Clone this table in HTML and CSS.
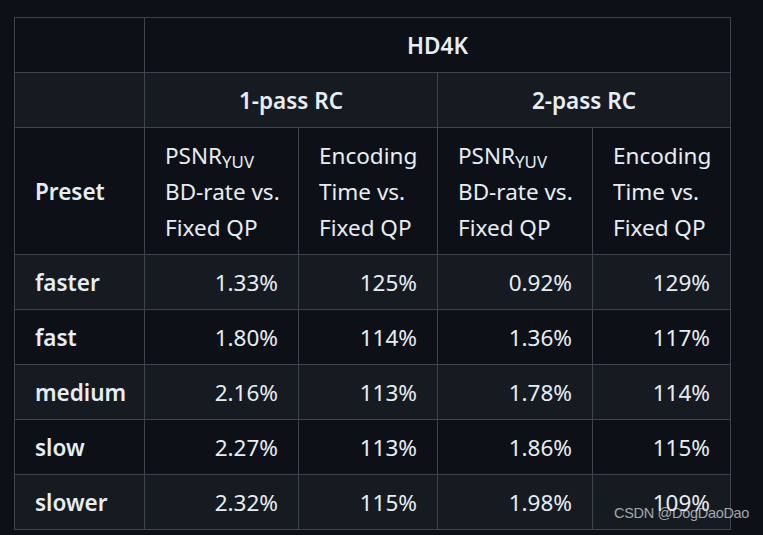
FILE: index.html
```html
<!DOCTYPE html>
<html>
<head>
<meta charset="utf-8">
<link rel="stylesheet" href="styles.css">
</head>
<body>
<div class="page">
<table class="grid">
<colgroup>
<col class="c1"><col class="c2"><col class="c3"><col class="c4"><col class="c5">
</colgroup>
<tbody>
<tr><th></th><th colspan="4" class="center">HD4K</th></tr>
<tr><th></th><th colspan="2" class="center">1-pass RC</th><th colspan="2" class="center">2-pass RC</th></tr>
<tr><th class="left">Preset</th><td>PSNR<sub>YUV</sub><br>BD-rate vs.<br>Fixed QP</td><td>Encoding<br>Time vs.<br>Fixed QP</td><td>PSNR<sub>YUV</sub><br>BD-rate vs.<br>Fixed QP</td><td>Encoding<br>Time vs.<br>Fixed QP</td></tr>
<tr><th class="left">faster</th><td class="num">1.33%</td><td class="num">125%</td><td class="num">0.92%</td><td class="num">129%</td></tr>
<tr><th class="left">fast</th><td class="num">1.80%</td><td class="num">114%</td><td class="num">1.36%</td><td class="num">117%</td></tr>
<tr><th class="left">medium</th><td class="num">2.16%</td><td class="num">113%</td><td class="num">1.78%</td><td class="num">114%</td></tr>
<tr><th class="left">slow</th><td class="num">2.27%</td><td class="num">113%</td><td class="num">1.86%</td><td class="num">115%</td></tr>
<tr><th class="left">slower</th><td class="num">2.32%</td><td class="num">115%</td><td class="num">1.98%</td><td class="num">109%</td></tr>
</tbody>
</table>
<div class="watermark">CSDN @DogDaoDao</div>
</div>
</body>
</html>
```
FILE: styles.css
```css
html, body {
  margin: 0;
  padding: 0;
  background: #0d1117;
}
.page {
  position: relative;
  width: 763px;
  height: 535px;
  padding: 17px 0 0 14px;
  box-sizing: border-box;
}
.grid {
  border-collapse: collapse;
  table-layout: fixed;
  width: 717px;
  font-family: "Noto Sans", "Open Sans", sans-serif;
  font-size: 22.5px;
  line-height: 36px;
  color: #e6edf3;
}
.c1 { width: 130px; }
.c2 { width: 154px; }
.c3 { width: 139px; }
.c4 { width: 155px; }
.c5 { width: 138px; }
.grid tr { background: #0d1117; }
.grid tr:nth-child(even) { background: #161b22; }
.grid th, .grid td {
  border: 1px solid #3d444d;
  padding: 10px 20px 8px;
  vertical-align: middle;
  white-space: nowrap;
  overflow: hidden;
}
.grid th { font-weight: 600; }
.grid td { font-weight: 400; text-align: left; }
.center { text-align: center; }
.left { text-align: left; }
.grid td.num { text-align: right; }
sub {
  font-size: 75%;
  line-height: 0;
  position: relative;
  vertical-align: baseline;
  bottom: -0.25em;
}
.watermark {
  position: absolute;
  left: 614px;
  top: 505px;
  font-family: "Liberation Sans", Arial, sans-serif;
  font-size: 14.5px;
  color: rgba(220, 224, 228, 0.72);
  letter-spacing: -0.3px;
}
```
